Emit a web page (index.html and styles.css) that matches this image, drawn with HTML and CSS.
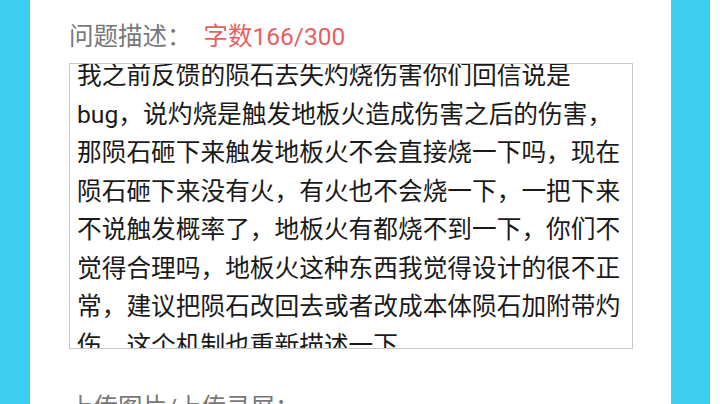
FILE: index.html
```html
<!DOCTYPE html>
<html lang="zh-CN">
<head>
    <meta charset="UTF-8">
    <meta name="viewport" content="width=device-width, initial-scale=1.0">
    <title>问题反馈</title>
    <link rel="stylesheet" href="styles.css">
</head>
<body>
    <div class="page">
        <div class="side side-left"></div>
        <div class="panel">
            <div class="field-label">
                问题描述：<span class="count">字数166/300</span>
            </div>
            <div class="desc-box">
                <div class="desc-text">
                    我之前反馈的陨石去失灼烧伤害你们回信说是<br>
                    bug，说灼烧是触发地板火造成伤害之后的伤害，<br>
                    那陨石砸下来触发地板火不会直接烧一下吗，现在<br>
                    陨石砸下来没有火，有火也不会烧一下，一把下来<br>
                    不说触发概率了，地板火有都烧不到一下，你们不<br>
                    觉得合理吗，地板火这种东西我觉得设计的很不正<br>
                    常，建议把陨石改回去或者改成本体陨石加附带灼<br>
                    伤，这个机制也重新描述一下
                </div>
            </div>
            <div class="field-label upload-label">上传图片/上传录屏：</div>
        </div>
        <div class="side side-right"></div>
        <div class="edge"></div>
    </div>
</body>
</html>
```

FILE: styles.css
```css
body, html {
    margin: 0;
    padding: 0;
    width: 100%;
    height: 100%;
    overflow: hidden;
    background: #fff;
    font-family: Roboto, "Noto Sans CJK SC", sans-serif;
}

.page {
    display: flex;
    flex-direction: row;
    height: 404px;
}

.side {
    background: #3ccdf0;
}

.side-left {
    width: 30px;
}

.side-right {
    width: 39px;
}

.edge {
    width: 10px;
    background: #fff;
}

.panel {
    flex: 1;
    background: #fff;
    padding: 18px 0 0 39px;
    overflow: hidden;
}

.field-label {
    font-size: 24.5px;
    line-height: 38px;
    color: #787878;
    white-space: nowrap;
}

.count {
    margin-left: 12px;
    color: #e8605e;
}

.desc-box {
    margin-top: 7px;
    width: 562px;
    height: 284px;
    border: 1px solid #c9c9c9;
    overflow: hidden;
}

/* content is scrolled a little, so the first and last lines are clipped */
.desc-text {
    margin-top: -7px;
    padding-left: 7px;
    font-size: 24.7px;
    line-height: 38.5px;
    color: #1a1a1a;
    white-space: nowrap;
}

.upload-label {
    margin-top: 40px;
}
```
